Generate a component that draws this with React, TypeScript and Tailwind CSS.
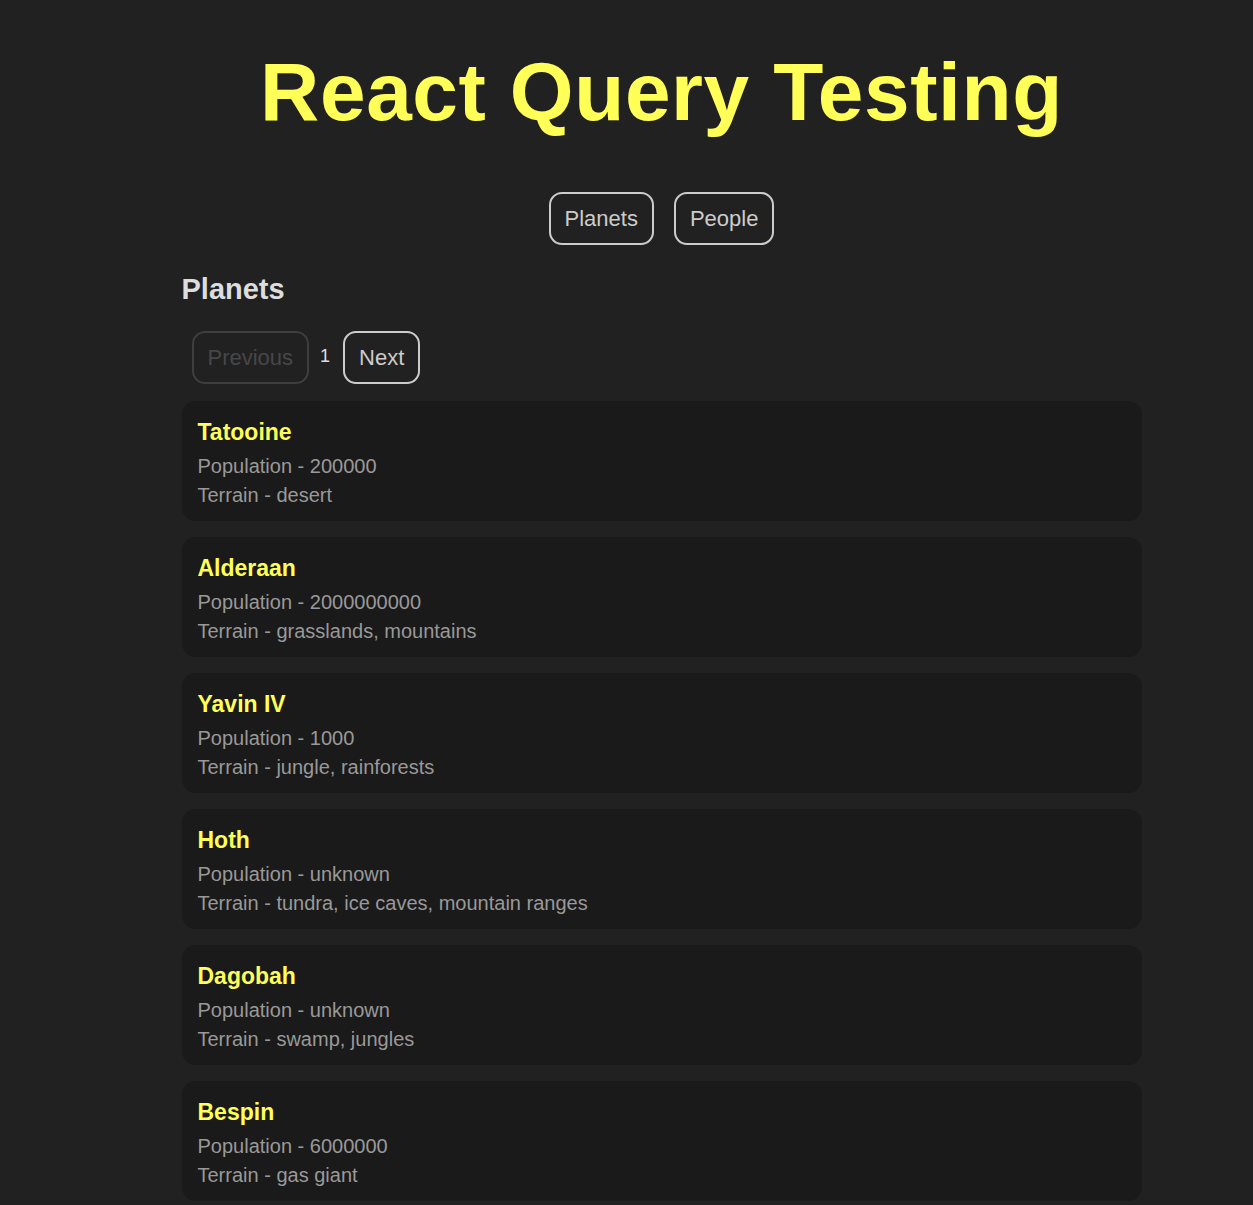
const planets = [
  { name: "Tatooine", population: "200000", terrain: "desert" },
  { name: "Alderaan", population: "2000000000", terrain: "grasslands, mountains" },
  { name: "Yavin IV", population: "1000", terrain: "jungle, rainforests" },
  { name: "Hoth", population: "unknown", terrain: "tundra, ice caves, mountain ranges" },
  { name: "Dagobah", population: "unknown", terrain: "swamp, jungles" },
  { name: "Bespin", population: "6000000", terrain: "gas giant" },
];

const Planet = ({ planet }: { planet: (typeof planets)[number] }) => {
  return (
    <div className="bg-[#1a1a1a] rounded-[14px] px-4 pt-[17px] pb-[11px]">
      <h3 className="text-[#ffff57] text-[23px] leading-[28px] font-bold">{planet.name}</h3>
      <p className="text-[#999999] text-[20px] leading-[29px] mt-[6px]">Population - {planet.population}</p>
      <p className="text-[#999999] text-[20px] leading-[29px]">Terrain - {planet.terrain}</p>
    </div>
  );
};

export default function App() {
  return (
    <div
      className="min-h-screen bg-[#212121] pl-[70px] pb-10"
      style={{ fontFamily: '"Liberation Sans", Arial, sans-serif' }}
    >
      <div className="flex flex-col items-center">
        <h1 className="text-[#ffff57] text-[82px] leading-[94px] font-bold tracking-[0.6px] mt-[45px]">
          React Query Testing
        </h1>
        <nav className="flex gap-5 mt-[53px]">
          <button className="border-2 border-[#cccccc] text-[#cccccc] rounded-[13px] text-[22px] h-[53px] px-[14px]">
            Planets
          </button>
          <button className="border-2 border-[#cccccc] text-[#cccccc] rounded-[13px] text-[22px] h-[53px] px-[14px]">
            People
          </button>
        </nav>
        <div className="w-[960px] mt-[24px]">
          <h2 className="text-[#dddddd] text-[29px] leading-[40px] font-bold">Planets</h2>
          <div className="flex items-center ml-[10px] mt-[22px]">
            <button className="border-2 border-[#3e3e3e] text-[#474747] rounded-[13px] text-[22px] h-[53px] px-[14px]" disabled>
              Previous
            </button>
            <span className="text-[#dddddd] text-[18px] -mt-[2px] ml-[11px] mr-[13px]">1</span>
            <button className="border-2 border-[#cccccc] text-[#cccccc] rounded-[13px] text-[22px] h-[53px] px-[14px]">
              Next
            </button>
          </div>
          <div className="flex flex-col gap-4 mt-[17px]">
            {planets.map((p) => (
              <Planet key={p.name} planet={p} />
            ))}
          </div>
        </div>
      </div>
    </div>
  );
}
